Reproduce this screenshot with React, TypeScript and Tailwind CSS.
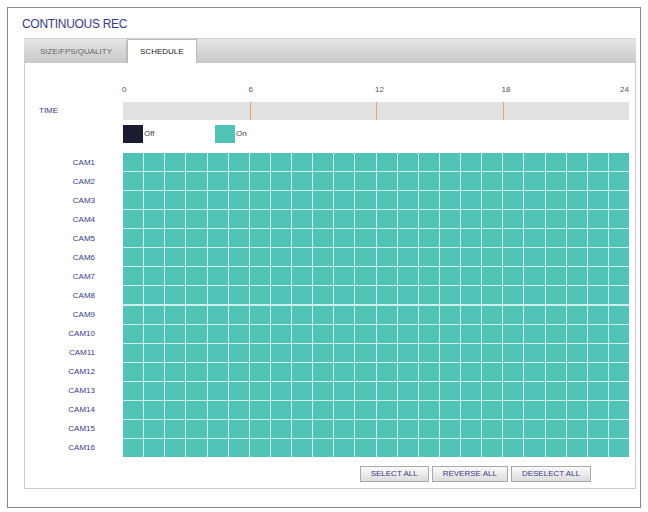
const hours = [0, 6, 12, 18, 24]
const cams = Array.from({ length: 16 }, (_, i) => `CAM${i + 1}`)

export default function App() {
  return (
    <div className="w-[648px] h-[512px] bg-white p-[7px] pb-[4px]" style={{ fontFamily: '"Liberation Sans", Arial, sans-serif' }}>
      <div className="h-full border border-[#8a8a8a] flex flex-col">
        <div className="px-[14px] pt-[7px] text-[12px] text-[#3a3a8a] tracking-tight">CONTINUOUS REC</div>
        <div className="ml-[16px] mr-[4px] mt-[5px] h-[26px] flex items-end bg-gradient-to-b from-[#e6e6e6] to-[#c8c8c8] border-t border-[#d0d0d0]">
          <div className="h-[22px] px-[14px] flex items-center text-[8px] text-[#666] border-r border-[#bbb] ml-[2px]">SIZE/FPS/QUALITY</div>
          <div className="h-[24px] px-[12px] flex items-center text-[8px] text-[#222] bg-white border border-[#bbb] border-b-0">SCHEDULE</div>
        </div>
        <div className="ml-[16px] mr-[4px] flex-1 border-x border-b border-[#ccc] relative flex flex-col pb-[6px]">
          <div className="relative h-[36px] ml-[98px] mr-[6px] mt-[3px]">
            {hours.map((h) => (
              <span key={h} className="absolute top-[18px] text-[8px] text-[#555]" style={{ left: `${(h / 24) * 100}%`, transform: h === 24 ? "translateX(-100%)" : "translateX(-1px)" }}>{h}</span>
            ))}
          </div>
          <div className="flex items-center h-[18px]">
            <span className="w-[98px] pl-[14px] text-[8px] text-[#3a3a8a]">TIME</span>
            <div className="flex-1 mr-[6px] h-full bg-[#e2e2e2] relative">
              {[6, 12, 18].map((h) => (
                <div key={h} className="absolute top-0 bottom-0 w-px bg-[#f0a070]" style={{ left: `${(h / 24) * 100}%` }} />
              ))}
            </div>
          </div>
          <div className="flex items-center h-[18px] mt-[5px] ml-[98px] gap-[1px]">
            <div className="w-[20px] h-full bg-[#1c1c30]" />
            <span className="text-[8px] text-[#444] w-[70px]">Off</span>
            <div className="w-[20px] h-full bg-[#4fc4b6]" />
            <span className="text-[8px] text-[#444]">On</span>
          </div>
          <div className="flex mt-[10px]">
            <div className="w-[98px] flex flex-col">
              {cams.map((c) => (
                <div key={c} className="h-[19px] flex items-center justify-end pr-[28px] text-[8px] text-[#3a3a8a]">{c}</div>
              ))}
            </div>
            <div className="flex-1 mr-[6px] grid grid-cols-[repeat(24,1fr)] gap-[1px] bg-[#cdeee9] p-0">
              {Array.from({ length: 16 * 24 }, (_, i) => (
                <div key={i} className="h-[18px] bg-[#4fc4b6]" />
              ))}
            </div>
          </div>
          <div className="flex justify-end gap-[3px] mt-[9px] mr-[44px]">
            {["SELECT ALL", "REVERSE ALL", "DESELECT ALL"].map((b) => (
              <button key={b} className="h-[16px] px-[10px] text-[8px] text-[#3a3a8a] bg-gradient-to-b from-[#fafafa] to-[#dcdcdc] border border-[#aaa]">{b}</button>
            ))}
          </div>
        </div>
        <div className="h-[26px]" />
      </div>
    </div>
  )
}
